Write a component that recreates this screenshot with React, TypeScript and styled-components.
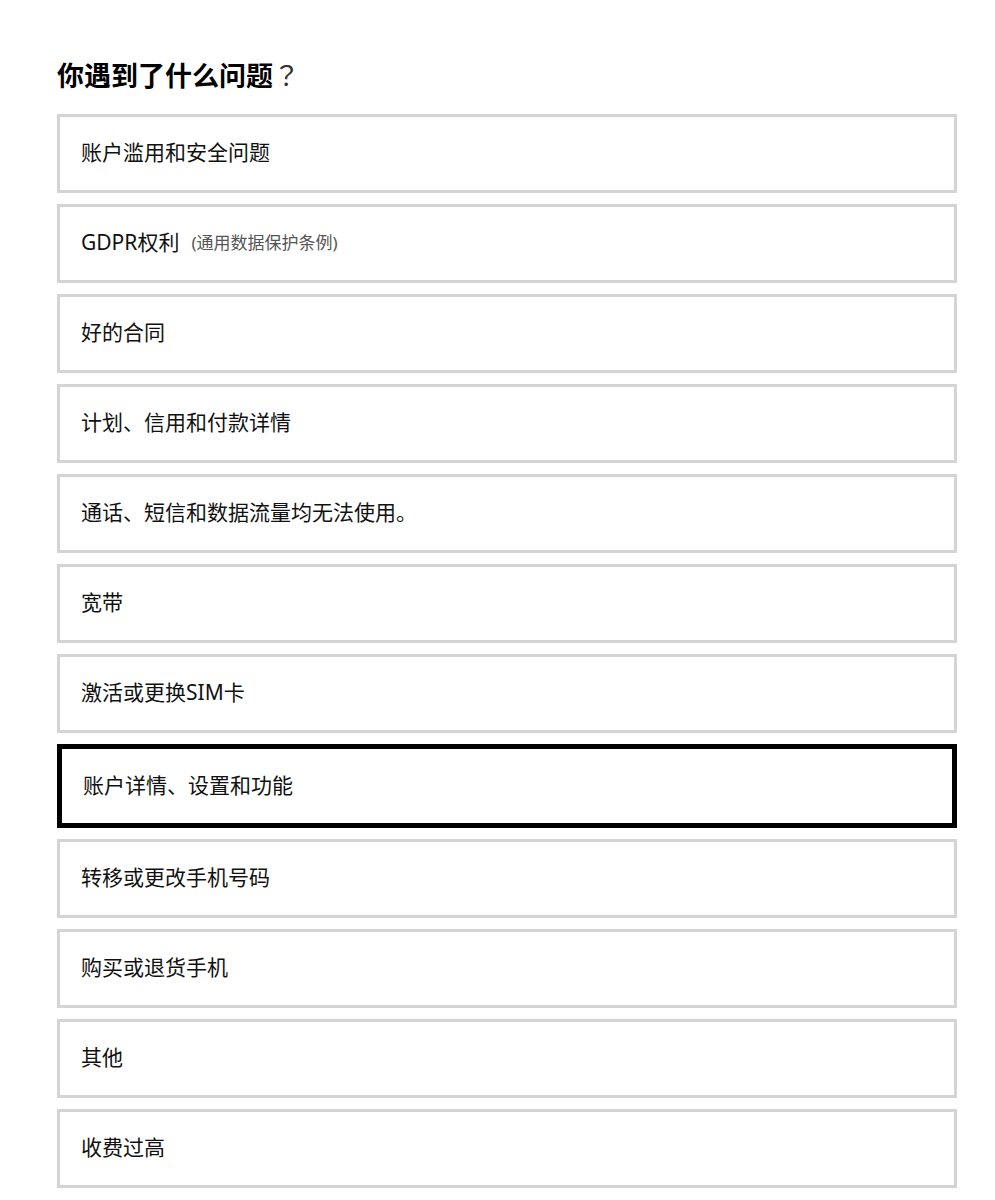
import React, { FunctionComponent } from "react"
import styled, { createGlobalStyle } from "styled-components"

const GlobalStyle = createGlobalStyle`
  body {
    margin: 0;
    background: #ffffff;
    font-family: "Noto Sans", "Noto Sans CJK SC", sans-serif;
    color: #000000;
  }
`

const Page = styled.main`
  width: 900px;
  padding: 0 0 0 57px;
`

// only the bottom edge of this line is left in view
const Lead = styled.p`
  margin: -20px 0 0;
  font-size: 16px;
  line-height: 24px;
  color: #777777;
`

const Title = styled.h2`
  margin: 54px 0 21px;
  font-size: 27px;
  line-height: 34px;
  font-weight: 700;
`

const Ask = styled.span`
  font-family: "Noto Sans CJK TC", "Noto Sans CJK SC", sans-serif;
  font-weight: 400;
  color: #333333;
`

const List = styled.div`
  display: flex;
  flex-direction: column;
  gap: 11px;
`

const Option = styled.button<{ $active?: boolean }>`
  display: flex;
  align-items: center;
  gap: 12px;
  box-sizing: border-box;
  width: 900px;
  height: ${({ $active }) => ($active ? "84px" : "79px")};
  padding: 0 21px 5px;
  border: ${({ $active }) => ($active ? "5px solid #000000" : "3px solid #d4d4d4")};
  background: #ffffff;
  font-family: inherit;
  font-size: 21px;
  color: #111111;
  text-align: left;
  cursor: pointer;
`

const Note = styled.span`
  font-size: 17px;
  color: #555555;
`

const options = [
  { label: "账户滥用和安全问题" },
  { label: "GDPR权利", note: "(通用数据保护条例)" },
  { label: "好的合同" },
  { label: "计划、信用和付款详情" },
  { label: "通话、短信和数据流量均无法使用。" },
  { label: "宽带" },
  { label: "激活或更换SIM卡" },
  { label: "账户详情、设置和功能", active: true },
  { label: "转移或更改手机号码" },
  { label: "购买或退货手机" },
  { label: "其他" },
  { label: "收费过高" },
]

const App: FunctionComponent = () => (
  <>
    <GlobalStyle />
    <Page>
      <Lead>请从下面的列表中选择最符合你情况的选项，以便我们为你提供帮助。</Lead>
      <Title>
        你遇到了什么问题<Ask>？</Ask>
      </Title>
      <List>
        {options.map((o) => (
          <Option key={o.label} $active={o.active}>
            <span>{o.label}</span>
            {o.note && <Note>{o.note}</Note>}
          </Option>
        ))}
      </List>
    </Page>
  </>
)

export default App
